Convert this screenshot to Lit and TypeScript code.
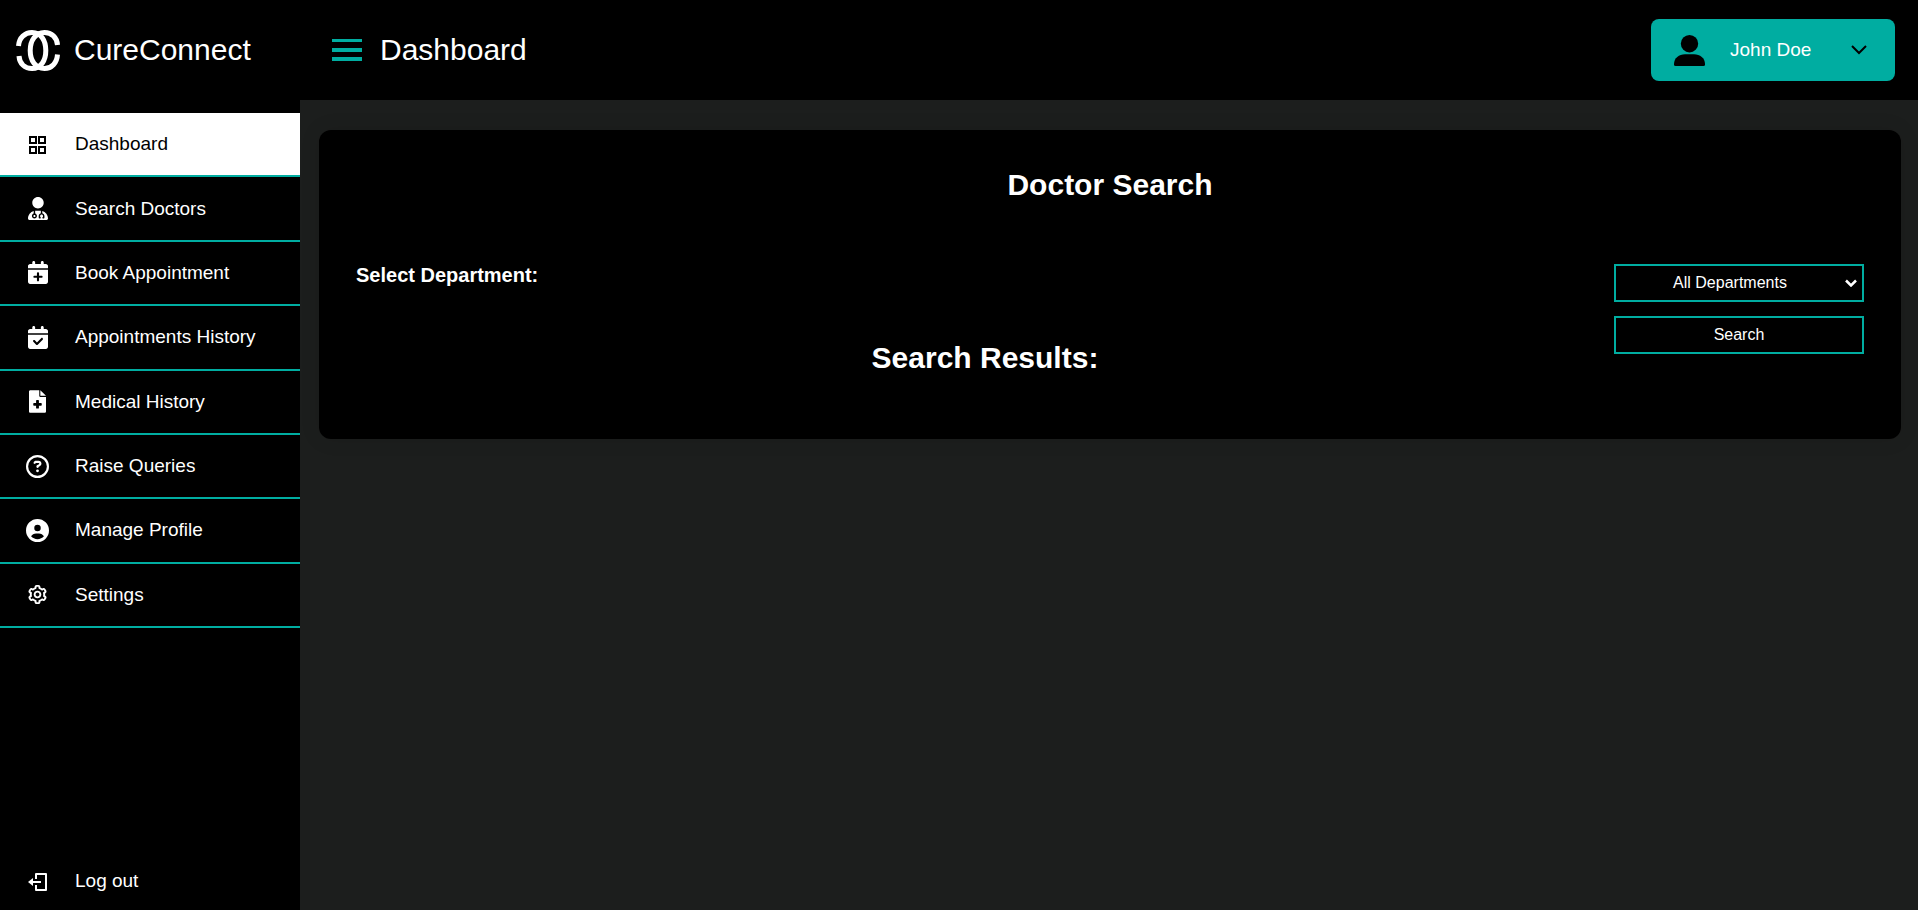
import { LitElement, html, css, svg } from "lit";
import { customElement, state } from "lit/decorators.js";
import { classMap } from "lit/directives/class-map.js";

const calendar =
  "M96 32V64H48C21.5 64 0 85.5 0 112v48H448V112c0-26.5-21.5-48-48-48H352V32c0-17.7-14.3-32-32-32s-32 14.3-32 32V64H160V32c0-17.7-14.3-32-32-32S96 14.3 96 32zM448 192H0V464c0 26.5 21.5 48 48 48H400c26.5 0 48-21.5 48-48V192z";

const icons = {
  grid: { box: "0 0 23 23", w: 23, d: "M3 3h8v8H3zM5 5v4h4V5zM12 3h8v8h-8zM14 5v4h4V5zM3 13h8v8H3zM5 15v4h4v-4zM12 13h8v8h-8zM14 15v4h4v-4z" },
  doctor: { box: "0 0 448 512", w: 20, d: "M224 256c70.7 0 128-57.3 128-128S294.7 0 224 0 96 57.3 96 128s57.3 128 128 128zm-96 55.2C54 332.9 0 401.3 0 482.3C0 498.7 13.3 512 29.7 512H418.3c16.4 0 29.7-13.3 29.7-29.7c0-81-54-149.4-128-171.1V362c27.6 7.1 48 32.2 48 62v40c0 8.8-7.2 16-16 16H336c-8.8 0-16-7.2-16-16s7.2-16 16-16V424c0-17.7-14.3-32-32-32s-32 14.3-32 32v24c8.8 0 16 7.2 16 16s-7.2 16-16 16H256c-8.8 0-16-7.2-16-16V424c0-29.8 20.4-54.9 48-62V304.9c-6-.6-12.1-.9-18.3-.9H178.3c-6.2 0-12.3 .3-18.3 .9v65.4c23.1 6.9 40 28.3 40 53.7c0 30.9-25.1 56-56 56s-56-25.1-56-56c0-25.4 16.9-46.8 40-53.7V311.2zM144 448c13.3 0 24-10.7 24-24s-10.7-24-24-24s-24 10.7-24 24s10.7 24 24 24z" },
  plus: { box: "0 0 448 512", w: 20, d: calendar + "M224 248c13.3 0 24 10.7 24 24v56h56c13.3 0 24 10.7 24 24s-10.7 24-24 24H248v56c0 13.3-10.7 24-24 24s-24-10.7-24-24V376H144c-13.3 0-24-10.7-24-24s10.7-24 24-24h56V272c0-13.3 10.7-24 24-24z" },
  check: { box: "0 0 448 512", w: 20, d: calendar + "M329 305c9.4-9.4 9.4-24.6 0-33.9s-24.6-9.4-33.9 0l-95 95-47-47c-9.4-9.4-24.6-9.4-33.9 0s-9.4 24.6 0 33.9l64 64c9.4 9.4 24.6 9.4 33.9 0L329 305z" },
  file: { box: "0 0 384 512", w: 17, d: "M32 0C14 0 0 14 0 32V480c0 18 14 32 32 32H352c18 0 32-14 32-32V152H256c-17.7 0-24-6.3-24-24V0zM256 0V128H384zM160 240c0-8.8 7.2-16 16-16h32c8.8 0 16 7.2 16 16v48h48c8.8 0 16 7.2 16 16v32c0 8.8-7.2 16-16 16H224v48c0 8.8-7.2 16-16 16H176c-8.8 0-16-7.2-16-16V352H112c-8.8 0-16-7.2-16-16V304c0-8.8 7.2-16 16-16h48z" },
  question: { box: "0 0 512 512", w: 23, d: "M464 256A208 208 0 1 0 48 256a208 208 0 1 0 416 0zM0 256a256 256 0 1 1 512 0A256 256 0 1 1 0 256zm169.8-90.7c7.9-22.3 29.1-37.3 52.8-37.3h58.3c34.9 0 63.1 28.3 63.1 63.1c0 22.6-12.1 43.5-31.7 54.8L280 264.4c-.2 13-10.9 23.6-24 23.6c-13.3 0-24-10.7-24-24V250.5c0-8.6 4.6-16.5 12.1-20.8l44.3-25.4c4.7-2.7 7.6-7.7 7.6-13.1c0-8.4-6.8-15.1-15.1-15.1H222.6c-3.4 0-6.4 2.1-7.5 5.3l-.4 1.2c-4.4 12.5-18.2 19-30.6 14.6s-19-18.2-14.6-30.6l.4-1.2zM224 352a32 32 0 1 1 64 0 32 32 0 1 1 -64 0z" },
  profile: { box: "0 0 512 512", w: 23, d: "M399 384.2C376.9 345.8 335.4 320 288 320H224c-47.4 0-88.9 25.8-111 64.2c35.2 39.2 86.2 63.8 143 63.8s107.8-24.7 143-63.8zM0 256a256 256 0 1 1 512 0A256 256 0 1 1 0 256zm256 16a72 72 0 1 0 0-144 72 72 0 1 0 0 144z" },
  cog: { box: "0 0 24 24", w: 23, d: "M12 16c2.206 0 4-1.794 4-4s-1.794-4-4-4-4 1.794-4 4 1.794 4 4 4zm0-6c1.084 0 2 .916 2 2s-.916 2-2 2-2-.916-2-2 .916-2 2-2zM2.845 16.136l1 1.73c.531.917 1.809 1.261 2.73.73l.529-.306A8.1 8.1 0 0 0 9 19.402V20c0 1.103.897 2 2 2h2c1.103 0 2-.897 2-2v-.598a8.132 8.132 0 0 0 1.896-1.111l.529.306c.923.53 2.198.188 2.731-.731l.999-1.729a2.001 2.001 0 0 0-.731-2.732l-.505-.292a7.718 7.718 0 0 0 0-2.224l.505-.292a2.002 2.002 0 0 0 .731-2.732l-.999-1.729c-.531-.92-1.808-1.265-2.731-.732l-.529.306A8.1 8.1 0 0 0 15 4.598V4c0-1.103-.897-2-2-2h-2c-1.103 0-2 .897-2 2v.598a8.132 8.132 0 0 0-1.896 1.111l-.529-.306c-.924-.531-2.2-.187-2.731.732l-.999 1.729a2.001 2.001 0 0 0 .731 2.732l.505.292a7.683 7.683 0 0 0 0 2.223l-.505.292a2.003 2.003 0 0 0-.731 2.733zm3.326-2.758A5.703 5.703 0 0 1 6 12c0-.462.058-.926.17-1.378a.999.999 0 0 0-.47-1.108l-1.123-.65.998-1.729 1.145.662a.997.997 0 0 0 1.188-.142 6.071 6.071 0 0 1 2.384-1.399A1 1 0 0 0 11 5.3V4h2v1.3a1 1 0 0 0 .708.956 6.083 6.083 0 0 1 2.384 1.399.999.999 0 0 0 1.188.142l1.144-.661 1 1.729-1.124.649a1 1 0 0 0-.47 1.108c.112.452.17.916.17 1.378 0 .461-.058.925-.171 1.378a1 1 0 0 0 .471 1.108l1.123.649-.998 1.729-1.145-.661a.996.996 0 0 0-1.188.142 6.071 6.071 0 0 1-2.384 1.399A1 1 0 0 0 13 18.7l.002 1.3H11v-1.3a1 1 0 0 0-.708-.956 6.083 6.083 0 0 1-2.384-1.399.992.992 0 0 0-1.188-.141l-1.144.662-1-1.729 1.124-.651a1 1 0 0 0 .471-1.108z" },
  exit: { box: "0 0 23 23", w: 23, d: "M2 12l5 4v-3h8v-2H7V8zM10 3h10q1 0 1 1v16q0 1-1 1H10q-1 0-1-1v-5h2v4h8V5h-8v4H9V4q0-1 1-1z" },
};

type IconName = keyof typeof icons;

const icon = (name: IconName) => {
  const { box, w, d } = icons[name];
  return html`<svg viewBox=${box} width=${w} height="23" fill="currentColor" aria-hidden="true">
    ${svg`<path fill-rule="evenodd" d=${d} />`}
  </svg>`;
};

const links: { label: string; icon: IconName }[] = [
  { label: "Dashboard", icon: "grid" },
  { label: "Search Doctors", icon: "doctor" },
  { label: "Book Appointment", icon: "plus" },
  { label: "Appointments History", icon: "check" },
  { label: "Medical History", icon: "file" },
  { label: "Raise Queries", icon: "question" },
  { label: "Manage Profile", icon: "profile" },
  { label: "Settings", icon: "cog" },
];

@customElement("app-root")
export class AppRoot extends LitElement {
  @state() private active = "Dashboard";

  static styles = css`
    :host {
      --teal: #00ada1;
      display: grid;
      grid-template-columns: 300px minmax(0, 1fr);
      min-height: 100vh;
      background: #1c1e1d;
      color: #fff;
      font-family: "Liberation Sans", Arial, sans-serif;
      font-size: 19px;
      line-height: 22px;
    }
    * {
      box-sizing: border-box;
    }
    svg {
      display: block;
      flex: none;
    }
    .sidebar {
      display: flex;
      flex-direction: column;
      background: #000;
    }
    .brand {
      display: flex;
      align-items: center;
      gap: 14px;
      height: 100px;
      padding-left: 16px;
      font-size: 30px;
      line-height: 34px;
    }
    .menu {
      display: grid;
      grid-auto-rows: 1fr;
      min-height: 515px;
      margin: 13px 0 0;
      padding: 0;
      list-style: none;
    }
    .link {
      display: flex;
      align-items: center;
      height: 100%;
      color: inherit;
      text-decoration: none;
    }
    .menu .link {
      border-bottom: 2px solid var(--teal);
    }
    .menu .active {
      background: #fff;
      color: #000;
    }
    .glyph {
      display: flex;
      justify-content: center;
      width: 75px;
    }
    .logout {
      height: 58px;
      margin-top: auto;
    }
    .header {
      display: flex;
      align-items: center;
      gap: 18px;
      height: 100px;
      padding: 0 23px 0 32px;
      background: #000;
    }
    .toggle {
      padding: 0;
      border: 0;
      background: none;
      color: var(--teal);
    }
    .title {
      margin: 0 auto 0 0;
      font-size: 30px;
      font-weight: 400;
      line-height: 34px;
    }
    .user {
      display: flex;
      align-items: center;
      width: 244px;
      height: 62px;
      padding: 0 24px 0 23px;
      border: 0;
      border-radius: 8px;
      background: var(--teal);
      color: #000;
      font: inherit;
    }
    .name {
      margin: 0 auto 0 25px;
      color: #fff;
    }
    .card {
      margin: 30px 17px 30px 19px;
      padding: 38px 37px;
      border-radius: 12px;
      background: #000;
      box-shadow: 0 0 20px rgba(0, 0, 0, 0.1);
    }
    .heading {
      margin: 0;
      font-size: 30px;
      line-height: 34px;
      text-align: center;
    }
    .search {
      display: grid;
      grid-template-columns: minmax(0, 1fr) 250px;
      margin-top: 62px;
    }
    .label {
      font-size: 20px;
      font-weight: 700;
      line-height: 23px;
    }
    .results {
      margin: 54px 0 26px;
    }
    .controls {
      display: flex;
      flex-direction: column;
      gap: 14px;
    }
    .picker {
      display: grid;
      align-items: center;
    }
    .picker > * {
      grid-area: 1 / 1;
    }
    .arrow {
      justify-self: end;
      margin-right: 7px;
      pointer-events: none;
    }
    .control {
      width: 100%;
      height: 38px;
      padding: 0;
      border: 2px solid var(--teal);
      border-radius: 0;
      background: #000;
      color: #fff;
      font: inherit;
      font-size: 16px;
      text-align: center;
    }
    .select {
      appearance: none;
      padding-right: 18px;
    }
  `;

  private link(label: string, name: IconName) {
    return html`<a
      class=${classMap({ link: true, active: this.active === label })}
      href="#"
      @click=${(e: Event) => {
        e.preventDefault();
        this.active = label;
      }}
      ><span class="glyph">${icon(name)}</span>${label}</a
    >`;
  }

  render() {
    return html`
      <aside class="sidebar">
        <div class="brand">
          <svg width="44" height="41" viewBox="0 0 44 41" fill="none" stroke="#fff" stroke-width="5" aria-hidden="true">
            <path d="M2.500 16C3 7.500 9 2.500 16 2.500C25 2.500 29.800 10.500 29.800 20.500S25 38.500 16 38.500C9 38.500 3.500 34 3 26" />
            <path d="M41.500 15C41 7.500 35.500 2.500 28.500 2.500C19.500 2.500 14.200 10.500 14.200 20.500S19.500 38.500 28.500 38.500C35.500 38.500 41 33 41.500 24.500" />
          </svg>
          CureConnect
        </div>
        <nav>
          <ul class="menu">
            ${links.map((l) => html`<li>${this.link(l.label, l.icon)}</li>`)}
          </ul>
        </nav>
        <div class="logout">${this.link("Log out", "exit")}</div>
      </aside>
      <div>
        <header class="header">
          <button class="toggle" aria-label="Toggle menu">
            <svg width="30" height="22" viewBox="0 0 30 22" fill="currentColor" aria-hidden="true">
              <path d="M0 0h30v3H0zM0 9h30v4H0zM0 18h30v4H0z" />
            </svg>
          </button>
          <h1 class="title">Dashboard</h1>
          <button class="user">
            <svg width="31" height="31" viewBox="0 0 31 31" fill="currentColor" aria-hidden="true">
              <circle cx="15.500" cy="8.700" r="8.700" />
              <path d="M0 29C0 23 5 19.200 11 19.200H20C26 19.200 31 23 31 29V29.500Q31 31 29.500 31H1.500Q0 31 0 29.500Z" />
            </svg>
            <span class="name">John Doe</span>
            <svg width="24" height="24" viewBox="0 0 24 24" fill="none" stroke="currentColor" stroke-width="2" aria-hidden="true">
              <path d="M5 8l7 7 7-7" />
            </svg>
          </button>
        </header>
        <main class="card">
          <h2 class="heading">Doctor Search</h2>
          <form class="search" @submit=${(e: Event) => e.preventDefault()}>
            <div>
              <label class="label" for="department">Select Department:</label>
              <h2 class="heading results">Search Results:</h2>
            </div>
            <div class="controls">
              <div class="picker">
                <select class="control select" id="department">
                  <option>All Departments</option>
                </select>
                <svg class="arrow" width="12" height="8" viewBox="0 0 12 8" fill="none" stroke="#fff" stroke-width="2.500" aria-hidden="true">
                  <path d="M1 1.500l5 5 5-5" />
                </svg>
              </div>
              <button class="control">Search</button>
            </div>
          </form>
        </main>
      </div>
    `;
  }
}
